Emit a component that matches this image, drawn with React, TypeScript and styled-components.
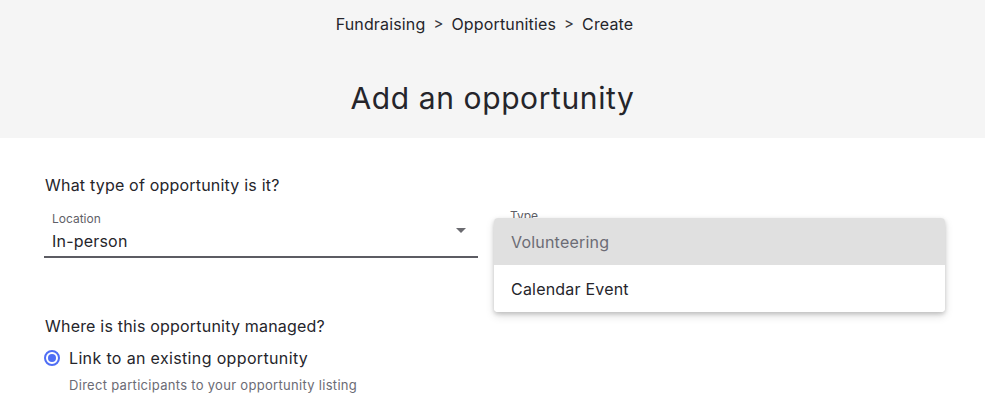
import React from "react";
import styled, { createGlobalStyle } from "styled-components";

const Global = createGlobalStyle`
  html, body { margin: 0; padding: 0; background: #ffffff; }
  body { font-family: "Inter", "Noto Sans", sans-serif; color: #25252b; }
  * { box-sizing: border-box; }
`;

const Header = styled.header`
  background: #f5f5f5;
  height: 138px;
  display: flex;
  flex-direction: column;
  align-items: center;
`;

const Breadcrumbs = styled.nav`
  margin: 13px 16px 0 0;
  display: flex;
  align-items: center;
  gap: 8px;
  font-size: 16px;
  line-height: 22px;
  letter-spacing: 0.15px;
  color: #25252b;
`;

const Sep = styled.span`
  font-size: 15px;
  color: #3a3a40;
`;

const Title = styled.h1`
  margin: 45px 0 0;
  font-size: 30px;
  line-height: 36px;
  font-weight: 400;
  color: #25252b;
  letter-spacing: 0.6px;
`;

const Main = styled.main`
  padding: 36px 40px 0 44px;
`;

const Question = styled.div`
  font-size: 16px;
  line-height: 22px;
  letter-spacing: 0.2px;
  color: #25252b;
  margin-left: 1px;
`;

const FieldRow = styled.div`
  display: grid;
  grid-template-columns: 434px 1fr;
  column-gap: 24px;
  margin-top: 10px;
`;

const Field = styled.div<{ $line?: boolean }>`
  position: relative;
  height: 52px;
  border-bottom: 2px solid ${(p) => (p.$line ? "#5c5c63" : "transparent")};
  padding: 5px 8px 0;
`;

const FieldLabel = styled.div<{ $raised?: boolean }>`
  font-size: 12px;
  line-height: 16px;
  color: #5f5f68;
  margin-top: ${(p) => (p.$raised ? "-3px" : "0")};
`;

const FieldValue = styled.div`
  font-size: 16px;
  line-height: 22px;
  letter-spacing: 0.2px;
  margin-top: 3px;
  color: #25252b;
`;

const Caret = styled.span`
  position: absolute;
  right: 12px;
  top: 22px;
  width: 0;
  height: 0;
  border-left: 5px solid transparent;
  border-right: 5px solid transparent;
  border-top: 5px solid #6b6b70;
`;

const Menu = styled.ul`
  position: absolute;
  left: -8px;
  right: 0;
  top: 12px;
  margin: 0;
  padding: 0;
  list-style: none;
  background: #ffffff;
  border-radius: 4px;
  overflow: hidden;
  box-shadow: 0 2px 4px rgba(0, 0, 0, 0.18), 0 4px 10px rgba(0, 0, 0, 0.12);
  z-index: 2;
`;

const MenuItem = styled.li<{ $selected?: boolean }>`
  height: 47px;
  display: flex;
  align-items: center;
  padding: 0 17px;
  font-size: 16px;
  letter-spacing: 0.2px;
  background: ${(p) => (p.$selected ? "#e0e0e0" : "#ffffff")};
  color: ${(p) => (p.$selected ? "#6c6c75" : "#25252b")};
`;

const Section = styled.div`
  margin-top: 57px;
`;

const RadioRow = styled.label`
  display: flex;
  align-items: center;
  gap: 9px;
  margin-top: 10px;
  font-size: 16px;
  line-height: 22px;
  letter-spacing: 0.35px;
  color: #25252b;
`;

const Radio = styled.span`
  width: 16px;
  height: 16px;
  border-radius: 50%;
  border: 2px solid #4f6ef5;
  display: inline-flex;
  align-items: center;
  justify-content: center;
  &::after {
    content: "";
    width: 8px;
    height: 8px;
    border-radius: 50%;
    background: #4f6ef5;
  }
`;

const Help = styled.div`
  margin: 7px 0 0 25px;
  font-size: 13px;
  line-height: 18px;
  letter-spacing: 0.3px;
  color: #6b6b75;
`;

export default function App() {
  return (
    <>
      <Global />
      <Header>
        <Breadcrumbs>
          <span>Fundraising</span>
          <Sep>&gt;</Sep>
          <span>Opportunities</span>
          <Sep>&gt;</Sep>
          <span>Create</span>
        </Breadcrumbs>
        <Title>Add an opportunity</Title>
      </Header>
      <Main>
        <Question>What type of opportunity is it?</Question>
        <FieldRow>
          <Field $line>
            <FieldLabel>Location</FieldLabel>
            <FieldValue>In-person</FieldValue>
            <Caret />
          </Field>
          <Field>
            <FieldLabel $raised>Type</FieldLabel>
            <Menu>
              <MenuItem $selected>Volunteering</MenuItem>
              <MenuItem>Calendar Event</MenuItem>
            </Menu>
          </Field>
        </FieldRow>
        <Section>
          <Question>Where is this opportunity managed?</Question>
          <RadioRow>
            <Radio />
            Link to an existing opportunity
          </RadioRow>
          <Help>Direct participants to your opportunity listing</Help>
        </Section>
      </Main>
    </>
  );
}
